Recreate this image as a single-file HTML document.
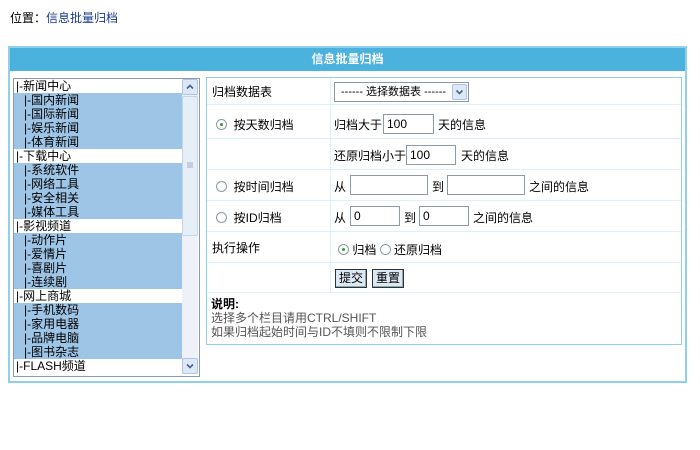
<!DOCTYPE html>
<html><head><meta charset="utf-8"><style>
*{box-sizing:border-box;margin:0;padding:0}
body{width:700px;height:450px;background:#fff;font:12px "Liberation Sans","Noto Sans CJK SC",sans-serif;color:#000;position:relative;overflow:hidden}
.a{position:absolute}
.loc{left:10px;top:9px}
.loc span{color:#1a3b8c}
.panel{left:8px;top:46px;width:679px;height:337px;border:2px solid #8fd0ea}
.hd{left:10px;top:48px;width:675px;height:23px;background:#4bb1dd;color:#fff;font-weight:bold;text-align:center;line-height:23px}
.list{left:13px;top:78px;width:187px;height:299px;border:1px solid #8a9aa6;background:#fff;overflow:hidden}
.list div{height:14px;line-height:14px;padding-left:2px;white-space:nowrap}
.list .s{background:#9ec4e6;margin-right:17px;padding-left:10px}
.sb{right:1px;top:1px;width:16px;height:295px;background:#eef2f8}
.sbt{position:absolute;left:0;width:16px;height:16px;border:1px solid #b0c4e4;background:#dce8f8;border-radius:2px}
.tbl{left:206px;top:77px;width:476px;height:268px;border:1px solid #8fd0ea}
.row{left:207px;width:474px;border-bottom:1px solid #dcf0f8}
.vl{left:330px;top:78px;width:1px;height:215px;background:#dcf0f8}
input.t{position:absolute;height:20px;border:1px solid #8a9aa6;font:12px "Liberation Sans",sans-serif;padding-left:3px}
.rad{display:inline-block;width:11px;height:11px;border:1px solid #8a9aa6;border-radius:50%;vertical-align:-1px;position:relative;background:#fff}
.rad.on:after{content:"";position:absolute;left:3px;top:3px;width:3px;height:3px;border-radius:50%;background:#2ea22e}
.btn{height:19px;border:1px solid #333;background:#dde8f4;padding:0 3px;line-height:16px;box-shadow:inset -1px -1px #8aa}
</style></head><body>
<div class="a loc">位置：<span>信息批量归档</span></div>
<div class="a panel"></div>
<div class="a hd">信息批量归档</div>
<div class="a list">
<div>|-新闻中心</div><div class="s">|-国内新闻</div><div class="s">|-国际新闻</div><div class="s">|-娱乐新闻</div><div class="s">|-体育新闻</div>
<div>|-下载中心</div><div class="s">|-系统软件</div><div class="s">|-网络工具</div><div class="s">|-安全相关</div><div class="s">|-媒体工具</div>
<div>|-影视频道</div><div class="s">|-动作片</div><div class="s">|-爱情片</div><div class="s">|-喜剧片</div><div class="s">|-连续剧</div>
<div>|-网上商城</div><div class="s">|-手机数码</div><div class="s">|-家用电器</div><div class="s">|-品牌电脑</div><div class="s">|-图书杂志</div>
<div>|-FLASH频道</div>
</div>
<div class="a sb" style="left:182px;top:79px">
<div class="sbt" style="top:0"><svg width="14" height="14"><path d="M4 8.5L7 5.5L10 8.5" stroke="#4d6185" stroke-width="1.6" fill="none"/></svg></div>
<div class="sbt" style="top:17px;height:140px;background:#e6eef8;border-color:#c6d4ea"><svg width="14" height="138"><path d="M4 66h6M4 68h6M4 70h6" stroke="#a0b0c8"/></svg></div>
<div class="sbt" style="bottom:0"><svg width="14" height="14"><path d="M4 5.5L7 8.5L10 5.5" stroke="#4d6185" stroke-width="1.6" fill="none"/></svg></div>
</div>
<div class="a tbl"></div>
<div class="a vl"></div>
<div class="a row" style="top:78px;height:27px"></div>
<div class="a row" style="top:105px;height:34px"></div>
<div class="a row" style="top:139px;height:31px"></div>
<div class="a row" style="top:170px;height:31px"></div>
<div class="a row" style="top:201px;height:31px"></div>
<div class="a row" style="top:232px;height:31px"></div>
<div class="a row" style="top:263px;height:30px"></div>
<div class="a" style="left:212px;top:83px">归档数据表</div>
<div class="a" style="left:334px;top:82px;width:135px;height:20px;border:1px solid #8a9aa6;padding-left:6px;line-height:18px;font-size:11px">------ 选择数据表 ------<div class="a sbt" style="left:auto;right:1px;top:1px;height:16px;width:15px"><svg width="13" height="14"><path d="M3.5 5.5L6.5 8.5L9.5 5.5" stroke="#4d6185" stroke-width="1.6" fill="none"/></svg></div></div>
<div class="a" style="left:216px;top:116px"><span class="rad on"></span>&nbsp; 按天数归档</div>
<div class="a" style="left:334px;top:116px">归档大于</div><input class="t" style="left:383px;top:114px;width:51px" value="100"><div class="a" style="left:438px;top:116px">天的信息</div>
<div class="a" style="left:334px;top:147px">还原归档小于</div><input class="t" style="left:406px;top:145px;width:50px" value="100"><div class="a" style="left:461px;top:147px">天的信息</div>
<div class="a" style="left:216px;top:178px"><span class="rad"></span>&nbsp; 按时间归档</div>
<div class="a" style="left:334px;top:178px">从</div><input class="t" style="left:350px;top:175px;width:78px"><div class="a" style="left:432px;top:178px">到</div><input class="t" style="left:447px;top:175px;width:78px"><div class="a" style="left:529px;top:178px">之间的信息</div>
<div class="a" style="left:216px;top:209px"><span class="rad"></span>&nbsp; 按ID归档</div>
<div class="a" style="left:334px;top:209px">从</div><input class="t" style="left:350px;top:206px;width:50px" value="0"><div class="a" style="left:404px;top:209px">到</div><input class="t" style="left:419px;top:206px;width:50px" value="0"><div class="a" style="left:473px;top:209px">之间的信息</div>
<div class="a" style="left:212px;top:239px">执行操作</div>
<div class="a" style="left:338px;top:241px"><span class="rad on"></span> 归档 <span class="rad"></span> 还原归档</div>
<div class="a btn" style="left:335px;top:269px">提交</div><div class="a btn" style="left:372px;top:269px">重置</div>
<div class="a" style="left:211px;top:297px;line-height:14px"><b>说明:</b><br><span style="color:#555">选择多个栏目请用CTRL/SHIFT<br>如果归档起始时间与ID不填则不限制下限</span></div>
</body></html>
